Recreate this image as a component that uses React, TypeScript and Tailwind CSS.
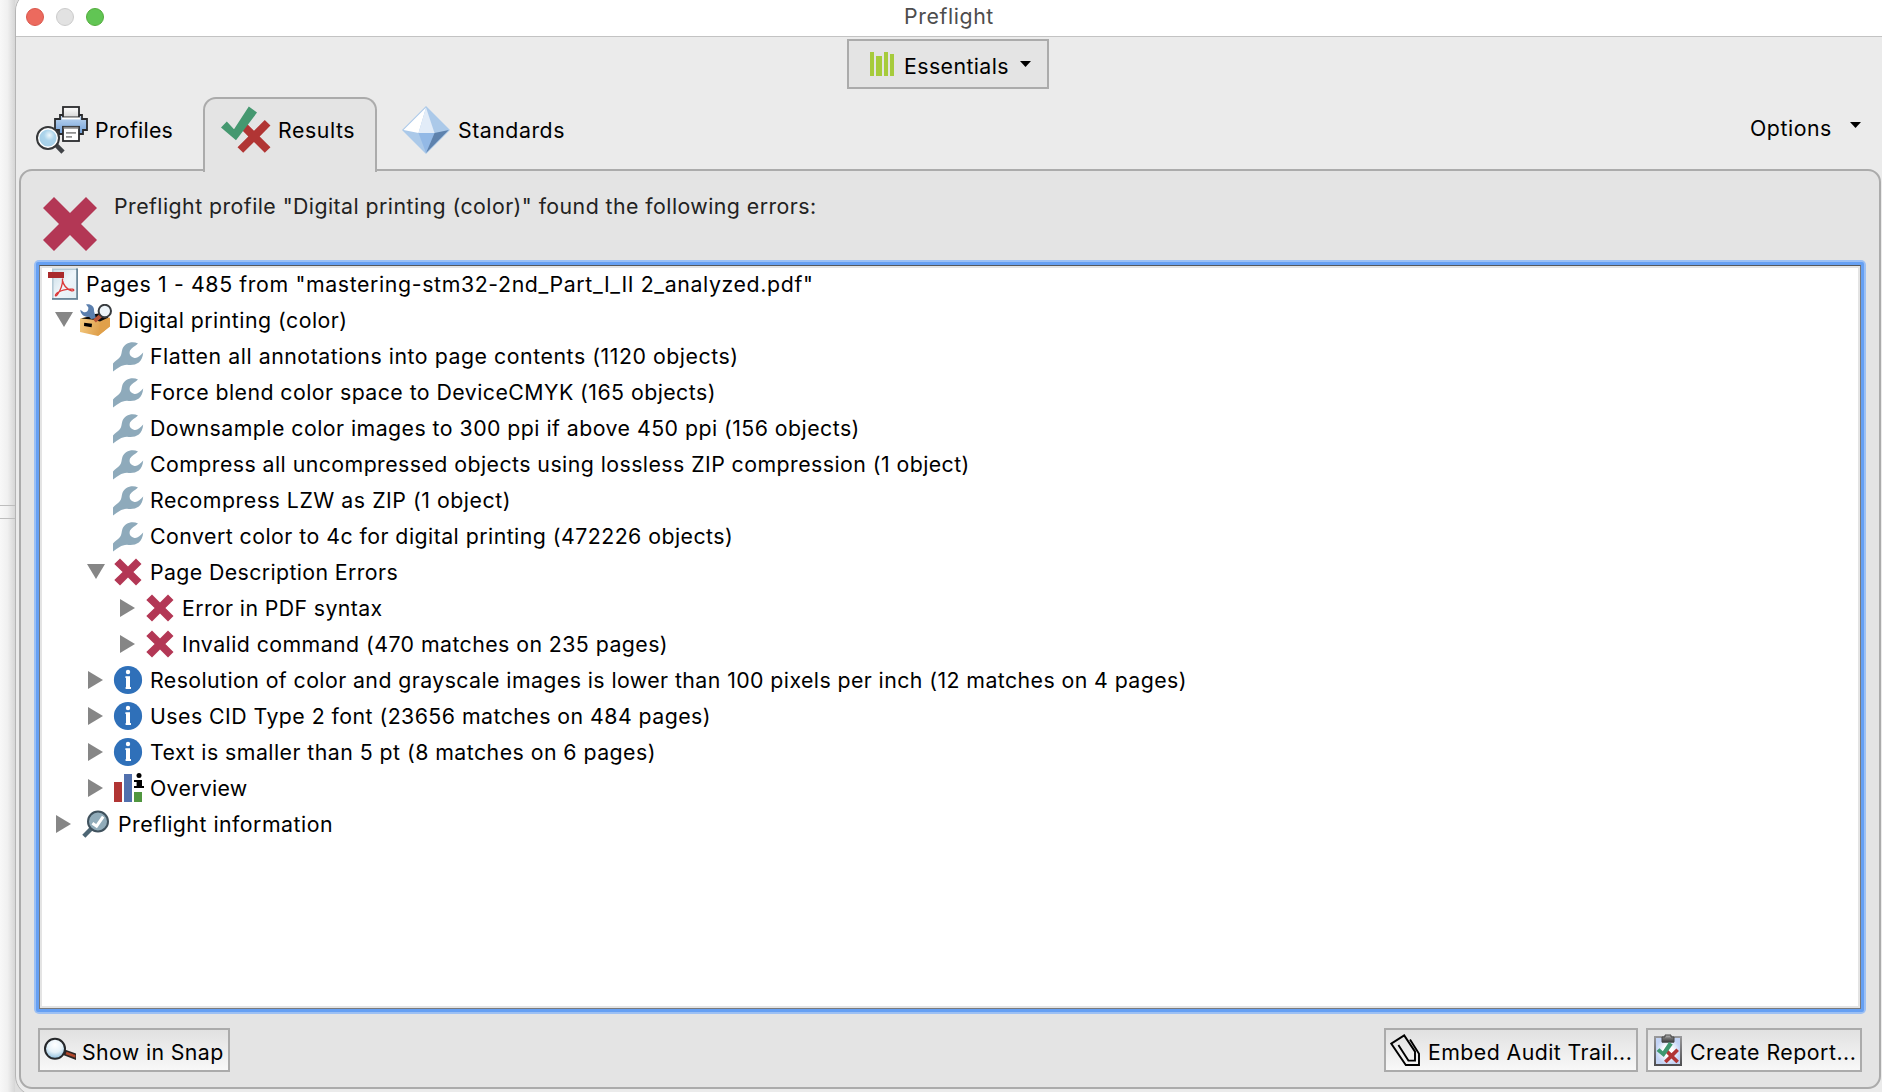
import React from 'react';

const CROSS = 'M3.6 0.5 L9.5 6.4 L15.4 0.5 L18.5 3.6 L12.6 9.5 L18.5 15.4 L15.4 18.5 L9.5 12.6 L3.6 18.5 L0.5 15.4 L6.4 9.5 L0.5 3.6 Z';

function BigCross() {
  return (
    <svg className="h-[54px] w-[54px] shrink-0" viewBox="0 0 54 54">
      <path d="M0 11 L11 0 L27 16 L43 0 L54 11 L38 27 L54 43 L43 54 L27 38 L11 54 L0 43 L16 27 Z" fill="#b33755" />
    </svg>
  );
}

function ErrorIcon() {
  return (
    <svg className="h-8 w-8" viewBox="0 0 32 32">
      <path d="M2.3 8 L8 2.6 L16 10.6 L24 2.6 L29.5 8 L21.4 16 L29.5 24 L24 29.4 L16 21.4 L8 29.4 L2.3 24 L10.6 16 Z" fill="#b33755" />
    </svg>
  );
}

function WrenchIcon() {
  return (
    <svg className="h-8 w-8" viewBox="0 0 32 32">
      <path
        d="M26 3.4 C20 0.6 12.5 3 10.4 9 C9.4 12 9.8 14.6 8 17 C6 19.6 3 21 1 23.6 L1 31.4 C6 28.2 9 25 15 24.8 C22 25.8 30.4 24.4 31.2 12.6 C28.5 15.8 25.5 18.4 22.5 18 C19 17.4 16.6 14.5 18 10.6 C19.4 7.4 23 6.4 26 3.4 Z"
        fill="#8eaabb"
      />
    </svg>
  );
}

function InfoIcon() {
  return (
    <svg className="h-8 w-8" viewBox="0 0 32 32">
      <circle cx="16" cy="16" r="14.1" fill="#2f70b9" />
      <circle cx="16" cy="8" r="2.2" fill="#fff" />
      <path d="M13.4 12.2 H18 V23 H19 V25 H13.6 V23 H14 V14 H13.4 Z" fill="#fff" />
    </svg>
  );
}

function OverviewIcon() {
  return (
    <svg className="h-8 w-8" viewBox="0 0 32 32">
      <rect x="2" y="10" width="8" height="20" fill="#b13534" />
      <rect x="12" y="2" width="8" height="28" fill="#5170ad" />
      <rect x="22" y="20" width="8" height="10" fill="#50963f" />
      <circle cx="27" cy="3.4" r="2.5" fill="#000" />
      <path d="M22 8 H30 V14 H32 V16 H22 V14 H24.6 V10 H22 Z" fill="#000" />
    </svg>
  );
}

function CheckLensIcon() {
  return (
    <svg className="h-8 w-8" viewBox="0 0 32 32">
      <path d="M11.5 20.5 L3.8 28.2" stroke="#4d6674" strokeWidth="4.4" />
      <circle cx="18" cy="13.5" r="10" fill="#91acba" stroke="#40525e" strokeWidth="2" />
      <path d="M12.4 15.2 L16.6 18.2 L23.2 8.6" fill="none" stroke="#fff" strokeWidth="3" />
    </svg>
  );
}

function PdfIcon() {
  return (
    <svg className="h-8 w-8" viewBox="0 0 32 32">
      <defs>
        <linearGradient id="pdfPage" x1="0" y1="0" x2="1" y2="1">
          <stop offset="0" stopColor="#cbdde6" />
          <stop offset="0.5" stopColor="#eef5fa" />
          <stop offset="1" stopColor="#e3eef4" />
        </linearGradient>
      </defs>
      <rect x="4" y="0.4" width="26" height="31.4" fill="#b4c9d5" />
      <path d="M28 0.4 H30 V31.8 H4 V30 H28 Z" fill="#6b8799" />
      <rect x="5.6" y="2" width="22.6" height="28" fill="url(#pdfPage)" />
      <path d="M0 4 H16 V10 H0 Z" fill="#a92a2c" />
      <path
        d="M14.6 10.5 C14.8 16.5 12.5 22.5 9 27.2 C8 28.4 6.8 28 7.8 26.4 C10.5 23 19.5 20.4 24.5 21.2 C26.8 21.8 25.8 23.3 23.6 22.8 C18.5 21.2 15.2 16.5 14.2 11.5"
        fill="none"
        stroke="#dc3a3a"
        strokeWidth="1.3"
      />
    </svg>
  );
}

function ToolboxIcon() {
  return (
    <svg className="h-8 w-8" viewBox="0 0 32 32">
      <defs>
        <linearGradient id="boxFront" x1="0" y1="0" x2="1" y2="0.3">
          <stop offset="0" stopColor="#f7cf86" />
          <stop offset="1" stopColor="#d9953f" />
        </linearGradient>
      </defs>
      <path d="M0 14.5 L6 13 L12 10 L30 14 L30 22 L18 32 L0 28 Z" fill="url(#boxFront)" />
      <path d="M20 19 L30 13.6 V22.5 L18.3 31.8 Z" fill="#e0a04a" />
      <path d="M1 14.5 L8 12.8 L15 10 L22 9 L28.5 13.5 L20 17.4 L12 15.6 Z" fill="#0b0a0a" />
      <path d="M4.2 18.8 L12 19.8 L11.6 23.2 L4 22 Z" fill="#000" />
      <path d="M6 0.5 C11 -0.5 14.5 2.5 14 7 L16 14.5 L11 15 L9 12.8 C4.5 13.5 0.5 10.5 0.3 5.8 L3.4 8 C6.5 9 9 6.5 8.2 3.2 Z" fill="#5b7fae" />
      <path d="M14.5 17 L21.5 11" stroke="#b95438" strokeWidth="4" />
      <circle cx="24.8" cy="7" r="6.2" fill="#edf4f9" stroke="#383b3f" strokeWidth="2" />
    </svg>
  );
}

function PrinterIcon() {
  return (
    <svg className="h-[50px] w-[54px]" viewBox="0 0 54 50">
      <defs>
        <linearGradient id="printerBody" x1="0" y1="0" x2="0" y2="1">
          <stop offset="0" stopColor="#c3daf2" />
          <stop offset="1" stopColor="#6f9fd8" />
        </linearGradient>
        <linearGradient id="paper" x1="0" y1="0" x2="0" y2="1">
          <stop offset="0" stopColor="#fff" />
          <stop offset="1" stopColor="#d5d5d5" />
        </linearGradient>
        <radialGradient id="profileLens" cx="0.58" cy="0.34" r="0.7">
          <stop offset="0" stopColor="#edf7fb" />
          <stop offset="0.45" stopColor="#acd4eb" />
          <stop offset="1" stopColor="#a4cee6" />
        </radialGradient>
      </defs>
      <path d="M24 11 H46 V15 H51 V26 H47 V30 H23 V26 H19 V15 H24 Z" fill="url(#printerBody)" stroke="#2a2b2d" strokeWidth="1.8" />
      <rect x="27" y="3" width="16" height="10.4" fill="url(#paper)" stroke="#2a2b2d" strokeWidth="1.8" />
      <rect x="26" y="13.4" width="18" height="2" fill="#fff" />
      <rect x="27" y="22.8" width="16" height="14.2" fill="#fff" stroke="#2a2b2d" strokeWidth="1.8" />
      <path d="M27.5 23.8 H42.5" stroke="#888" strokeWidth="2" />
      <path d="M30 28.8 H40 M30 32.8 H36" stroke="#909090" strokeWidth="1.8" />
      <path d="M19.6 40.5 L27 48.2" stroke="#404347" strokeWidth="4.6" />
      <circle cx="12" cy="34" r="11" fill="#fff" stroke="#36383a" strokeWidth="2" />
      <circle cx="12" cy="34" r="8.6" fill="url(#profileLens)" />
    </svg>
  );
}

function ResultsIcon() {
  return (
    <svg className="h-[50px] w-[50px]" viewBox="0 0 50 50">
      <g transform="translate(15.6 14) scale(1.83)">
        <path d={CROSS} fill="#b13534" />
      </g>
      <path d="M0 22.4 L5.8 16.4 L13 24.2 L27.8 1.4 L36 7.6 L15 35.2 Z" fill="#459870" />
    </svg>
  );
}

function StandardsIcon() {
  return (
    <svg className="h-12 w-12" viewBox="0 0 48 48">
      <path d="M24 0 L48 24 L24 48 L0 24 Z" fill="#abc9e9" />
      <path d="M24 1.4 L16.5 27 L1.5 24 Z" fill="#fff" />
      <path d="M24 1.4 L32.5 27 H16.5 Z" fill="#e2ecf8" />
      <path d="M16.5 27 H32.5 L24 47 Z" fill="#93b9e6" />
      <path d="M32.5 27 L46.8 24 L24 47 Z" fill="#5e82ad" />
    </svg>
  );
}

function BarsIcon() {
  return (
    <svg className="h-6 w-6" viewBox="0 0 24 24" fill="#a6cb3c">
      <rect x="0" y="0" width="4" height="24" />
      <rect x="6" y="4" width="6" height="20" />
      <rect x="14" y="0" width="4" height="24" />
      <rect x="20" y="2" width="4" height="22" />
    </svg>
  );
}

function Caret() {
  return (
    <svg className="h-1.5 w-[11px]" viewBox="0 0 11 6">
      <path d="M0 0 H11 L5.5 6 Z" fill="#000" />
    </svg>
  );
}

function SnapIcon() {
  return (
    <svg className="mt-1 h-8 w-8" viewBox="0 0 32 32">
      <defs>
        <radialGradient id="snapLens" cx="0.5" cy="0.3" r="0.75">
          <stop offset="0" stopColor="#fff" />
          <stop offset="0.5" stopColor="#e6f2f9" />
          <stop offset="1" stopColor="#7db4d8" />
        </radialGradient>
      </defs>
      <path d="M20 13.2 L32 17.4 V24 L18.5 18.8 Z" fill="#2b2726" />
      <path d="M22.5 15.8 L31.4 19 V21.8 L21.6 18.2 Z" fill="#b0482c" />
      <circle cx="11" cy="12.8" r="10" fill="url(#snapLens)" stroke="#26282b" strokeWidth="2" />
    </svg>
  );
}

function ClipIcon() {
  return (
    <svg className="h-8 w-8" viewBox="0 0 32 32" fill="none" stroke="#000" strokeWidth="1.9">
      <path d="M20 5.5 L29 19.8 V31 H15.8 L1.2 9.6 L14.2 1.4 L25 17.6 V26.6 H18.4 L8.4 11" />
    </svg>
  );
}

function ReportIcon() {
  return (
    <svg className="h-8 w-7" viewBox="0 0 28 32">
      <defs>
        <linearGradient id="board" x1="0" y1="0" x2="0" y2="1">
          <stop offset="0" stopColor="#9a9a9c" />
          <stop offset="1" stopColor="#4d4d50" />
        </linearGradient>
        <linearGradient id="clipMetal" x1="0" y1="0" x2="0" y2="1">
          <stop offset="0" stopColor="#c0c0c0" />
          <stop offset="0.5" stopColor="#6c6c6c" />
          <stop offset="1" stopColor="#3e3e3e" />
        </linearGradient>
        <radialGradient id="sheet">
          <stop offset="0.4" stopColor="#fff" />
          <stop offset="1" stopColor="#c3d4f5" />
        </radialGradient>
      </defs>
      <rect x="0" y="2" width="28" height="30" fill="url(#board)" />
      <rect x="2" y="4" width="24" height="26" fill="url(#sheet)" />
      <path d="M11 1 H17 V3 H20 V8.2 H8 V3 H11 Z" fill="url(#clipMetal)" stroke="#444" strokeWidth="1" />
      <g transform="translate(9.6 14) scale(0.83)">
        <path d={CROSS} fill="#b13534" />
      </g>
      <path d="M2.6 17 L5.4 14.2 L8.8 17.2 L15 8 L18.8 10.6 L9.8 23 Z" fill="#3f9870" />
    </svg>
  );
}

function Disclosure({ open }: { open: boolean }) {
  return open ? (
    <svg className="h-[15px] w-[18px]" viewBox="0 0 18 15">
      <path d="M0 0 H18 L9 15 Z" fill="#868686" />
    </svg>
  ) : (
    <svg className="h-[18px] w-[15px]" viewBox="0 0 15 18">
      <path d="M0 0 V18 L15 9 Z" fill="#868686" />
    </svg>
  );
}

type Row = {
  text: string;
  icon: React.ReactNode;
  indent: string;
  tracking: string;
  state?: 'open' | 'closed';
};

const L1 = 'pl-[10px]';
const L2 = 'pl-[42px]';
const L3 = 'pl-[74px]';

const rows: Row[] = [
  { text: 'Digital printing (color)', icon: <ToolboxIcon />, indent: L1, tracking: 'tracking-[0.48px]', state: 'open' },
  { text: 'Flatten all annotations into page contents (1120 objects)', icon: <WrenchIcon />, indent: L2, tracking: 'tracking-[0.54px]' },
  { text: 'Force blend color space to DeviceCMYK (165 objects)', icon: <WrenchIcon />, indent: L2, tracking: 'tracking-[0.45px]' },
  { text: 'Downsample color images to 300 ppi if above 450 ppi (156 objects)', icon: <WrenchIcon />, indent: L2, tracking: 'tracking-[0.46px]' },
  { text: 'Compress all uncompressed objects using lossless ZIP compression (1 object)', icon: <WrenchIcon />, indent: L2, tracking: 'tracking-[0.446px]' },
  { text: 'Recompress LZW as ZIP (1 object)', icon: <WrenchIcon />, indent: L2, tracking: 'tracking-[0.53px]' },
  { text: 'Convert color to 4c for digital printing (472226 objects)', icon: <WrenchIcon />, indent: L2, tracking: 'tracking-[0.465px]' },
  { text: 'Page Description Errors', icon: <ErrorIcon />, indent: L2, tracking: 'tracking-[0.39px]', state: 'open' },
  { text: 'Error in PDF syntax', icon: <ErrorIcon />, indent: L3, tracking: 'tracking-[0.38px]', state: 'closed' },
  { text: 'Invalid command (470 matches on 235 pages)', icon: <ErrorIcon />, indent: L3, tracking: 'tracking-[0.44px]', state: 'closed' },
  { text: 'Resolution of color and grayscale images is lower than 100 pixels per inch (12 matches on 4 pages)', icon: <InfoIcon />, indent: L2, tracking: 'tracking-[0.422px]', state: 'closed' },
  { text: 'Uses CID Type 2 font (23656 matches on 484 pages)', icon: <InfoIcon />, indent: L2, tracking: 'tracking-[0.46px]', state: 'closed' },
  { text: 'Text is smaller than 5 pt (8 matches on 6 pages)', icon: <InfoIcon />, indent: L2, tracking: 'tracking-[0.457px]', state: 'closed' },
  { text: 'Overview', icon: <OverviewIcon />, indent: L2, tracking: 'tracking-[0.3px]', state: 'closed' },
  { text: 'Preflight information', icon: <CheckLensIcon />, indent: L1, tracking: 'tracking-[0.49px]', state: 'closed' },
];

function TreeRow({ row }: { row: Row }) {
  return (
    <div className={`flex h-9 items-center ${row.indent}`}>
      <div className={`flex w-7 shrink-0 justify-center ${row.state === 'open' ? 'pr-1 pb-0.5' : 'pr-1.5'}`}>
        {row.state && <Disclosure open={row.state === 'open'} />}
      </div>
      <div className="shrink-0">{row.icon}</div>
      <span className={`ml-1.5 ${row.tracking}`}>{row.text}</span>
    </div>
  );
}

function PushButton({ className, children }: { className: string; children: React.ReactNode }) {
  return (
    <button className={`flex h-11 items-center border-2 border-[#ababab] bg-linear-to-b from-[#e1e1e1] to-[#f8f8f8] whitespace-nowrap ${className}`}>
      {children}
    </button>
  );
}

export default function App() {
  return (
    <div className="flex h-[1092px] w-[1882px] overflow-hidden bg-[#dedede] font-['Inter',sans-serif] text-[21.3px] leading-9 whitespace-nowrap text-black">
      <div className="flex w-[15px] shrink-0 flex-col bg-linear-to-r from-[#f8f8f8] via-[#f0f0f0] to-[#d6d6d6]">
        <div className="h-[505px] shrink-0" />
        <div className="h-3.5 shrink-0 border-y border-[#bdbdbd]" />
      </div>

      <div className="-mt-[9px] -mr-5 flex h-[1105px] flex-1 flex-col overflow-hidden rounded-[20px] border border-[#b5b5b5] bg-[#ebebeb]">
        <header className="flex h-[45px] shrink-0 items-center border-b border-[#c3c3c3] bg-white pt-1.5">
          <div className="flex w-[888px] gap-3 pl-[10px]">
            <span className="h-[18px] w-[18px] rounded-full border border-[#d9574c] bg-[#ec6a5e]" />
            <span className="h-[18px] w-[18px] rounded-full border border-[#cbcbcb] bg-[#e2e2e2]" />
            <span className="h-[18px] w-[18px] rounded-full border border-[#53ac3c] bg-[#61c554]" />
          </div>
          <h1 className="-mt-0.5 tracking-[0.6px] text-[#4d4d4d]">Preflight</h1>
        </header>

        <div className="flex h-[60px] shrink-0 pt-[2px] pl-[831px]">
          <button className="flex h-[50px] w-[202px] items-center border-2 border-[#ababab] bg-[#e4e4e4] pl-[21px]">
            <BarsIcon />
            <span className="mt-1 ml-[10px] w-[116px] text-left tracking-[0.42px]">Essentials</span>
            <Caret />
          </button>
        </div>

        <nav className="flex h-[74px] shrink-0 pl-[3px]">
          <div className="flex w-[184px] items-center pb-[10px] pl-[17px]">
            <PrinterIcon />
            <span className="mt-0.5 ml-[5px] tracking-[0.28px]">Profiles</span>
          </div>
          <div className="relative z-10 flex h-[75px] w-[174px] items-center rounded-t-[13px] border-2 border-b-0 border-[#ababab] bg-[#e4e4e4] pb-[11px] pl-4">
            <ResultsIcon />
            <span className="ml-[7px] tracking-[0.56px]">Results</span>
          </div>
          <div className="flex flex-1 items-center pb-2 pl-[25px]">
            <StandardsIcon />
            <span className="ml-2 tracking-[0.52px]">Standards</span>
          </div>
          <div className="flex w-[151px] items-center pb-3">
            <span className="w-[100px] tracking-[0.55px]">Options</span>
            <span className="-mt-1.5">
              <Caret />
            </span>
          </div>
        </nav>

        <main className="-mt-[2px] ml-[3px] flex h-[920px] w-[1862px] shrink-0 flex-col rounded-[13px] border-2 border-[#ababab] bg-[#e4e4e4]">
          <div className="flex h-[89px] shrink-0 pl-[22px]">
            <div className="pt-[26px]">
              <BigCross />
            </div>
            <p className="mt-[17px] ml-[17px] tracking-[0.45px] text-[#222]">
              Preflight profile "Digital printing (color)" found the following errors:
            </p>
          </div>

          <div className="ml-[13px] h-[754px] w-[1832px] shrink-0 rounded-[5px] bg-[#9cc0f4] p-[2px]">
            <div className="h-full rounded-[2px] bg-[#66a0f3] p-[3px]">
              <div className="h-full border border-[#77797c] border-t-[#55585c] bg-white">
                <div className="h-full border-2 border-[#e4e4e4] pl-[6px]">
                  <div className="-mt-[2px] flex h-9 items-center">
                    <PdfIcon />
                    <span className="ml-1.5 tracking-[0.625px]">Pages 1 - 485 from "mastering-stm32-2nd_Part_I_II 2_analyzed.pdf"</span>
                  </div>
                  <div className="-ml-[6px]">
                    {rows.map((row) => (
                      <TreeRow key={row.text} row={row} />
                    ))}
                  </div>
                </div>
              </div>
            </div>
          </div>

          <footer className="flex justify-between pt-[14px] pr-[17px] pl-[17px]">
            <PushButton className="w-48 pl-1">
              <SnapIcon />
              <span className="mt-1 ml-1.5 tracking-[0.38px]">Show in Snap</span>
            </PushButton>
            <div className="flex gap-2">
              <PushButton className="w-[254px] pl-1">
                <ClipIcon />
                <span className="mt-1 ml-1.5 tracking-[0.43px]">Embed Audit Trail...</span>
              </PushButton>
              <PushButton className="w-[216px] pl-[6px]">
                <ReportIcon />
                <span className="mt-1 ml-[8px] tracking-[0.5px]">Create Report...</span>
              </PushButton>
            </div>
          </footer>
        </main>
      </div>
    </div>
  );
}
